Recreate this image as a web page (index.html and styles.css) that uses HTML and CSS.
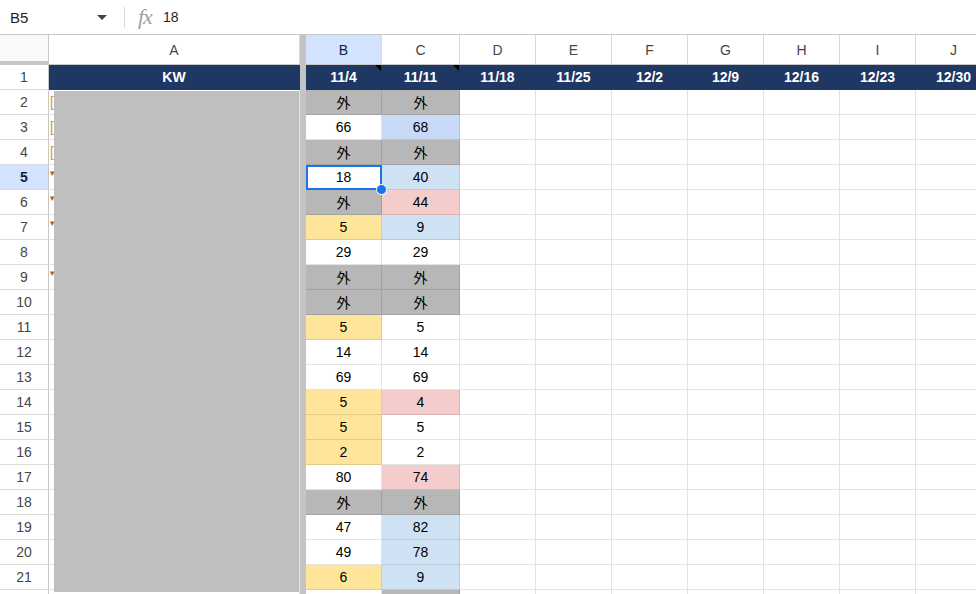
FILE: index.html
```html
<!DOCTYPE html>
<html lang="ja">
<head>
<meta charset="utf-8">
<title>Sheet</title>
<link rel="stylesheet" href="styles.css">
</head>
<body>
<div class="fbar">
  <div class="namebox"><span class="ref">B5</span><span class="caret"></span></div>
  <div class="sep"></div>
  <span class="fx">fx</span>
  <span class="fval">18</span>
</div>
<div class="sheet">
  <div class="row hdr">
    <div class="corner"></div>
    <div class="ch">A</div><div class="bar"></div>
    <div class="ch on">B</div><div class="ch">C</div><div class="ch">D</div><div class="ch">E</div><div class="ch">F</div><div class="ch">G</div><div class="ch">H</div><div class="ch">I</div><div class="ch">J</div>
  </div>
  <div class="row nav">
    <div class="rh">1</div>
    <div class="c n">KW</div><div class="bar"></div>
    <div class="c n note">11/4</div><div class="c n note">11/11</div><div class="c n">11/18</div><div class="c n">11/25</div><div class="c n">12/2</div><div class="c n">12/9</div><div class="c n">12/16</div><div class="c n">12/23</div><div class="c n">12/30</div>
  </div>
  <div class="row"><div class="rh">2</div><div class="c a"><span class="pk o">[</span></div><div class="bar"></div><div class="c g">外</div><div class="c g">外</div><div class="c"></div><div class="c"></div><div class="c"></div><div class="c"></div><div class="c"></div><div class="c"></div><div class="c"></div></div>
  <div class="row"><div class="rh">3</div><div class="c a"><span class="pk o">[</span></div><div class="bar"></div><div class="c">66</div><div class="c b2">68</div><div class="c"></div><div class="c"></div><div class="c"></div><div class="c"></div><div class="c"></div><div class="c"></div><div class="c"></div></div>
  <div class="row"><div class="rh">4</div><div class="c a"><span class="pk o">[</span></div><div class="bar"></div><div class="c g">外</div><div class="c g">外</div><div class="c"></div><div class="c"></div><div class="c"></div><div class="c"></div><div class="c"></div><div class="c"></div><div class="c"></div></div>
  <div class="row"><div class="rh sel">5</div><div class="c a"><span class="pk v">▾</span></div><div class="bar"></div><div class="c cur">18<span class="selbox"><span class="handle"></span></span></div><div class="c b1">40</div><div class="c"></div><div class="c"></div><div class="c"></div><div class="c"></div><div class="c"></div><div class="c"></div><div class="c"></div></div>
  <div class="row"><div class="rh">6</div><div class="c a"><span class="pk v">▾</span></div><div class="bar"></div><div class="c g">外</div><div class="c p">44</div><div class="c"></div><div class="c"></div><div class="c"></div><div class="c"></div><div class="c"></div><div class="c"></div><div class="c"></div></div>
  <div class="row"><div class="rh">7</div><div class="c a"><span class="pk v">▾</span></div><div class="bar"></div><div class="c y">5</div><div class="c b1">9</div><div class="c"></div><div class="c"></div><div class="c"></div><div class="c"></div><div class="c"></div><div class="c"></div><div class="c"></div></div>
  <div class="row"><div class="rh">8</div><div class="c a"></div><div class="bar"></div><div class="c">29</div><div class="c">29</div><div class="c"></div><div class="c"></div><div class="c"></div><div class="c"></div><div class="c"></div><div class="c"></div><div class="c"></div></div>
  <div class="row"><div class="rh">9</div><div class="c a"><span class="pk v">▾</span></div><div class="bar"></div><div class="c g">外</div><div class="c g">外</div><div class="c"></div><div class="c"></div><div class="c"></div><div class="c"></div><div class="c"></div><div class="c"></div><div class="c"></div></div>
  <div class="row"><div class="rh">10</div><div class="c a"></div><div class="bar"></div><div class="c g">外</div><div class="c g">外</div><div class="c"></div><div class="c"></div><div class="c"></div><div class="c"></div><div class="c"></div><div class="c"></div><div class="c"></div></div>
  <div class="row"><div class="rh">11</div><div class="c a"></div><div class="bar"></div><div class="c y">5</div><div class="c">5</div><div class="c"></div><div class="c"></div><div class="c"></div><div class="c"></div><div class="c"></div><div class="c"></div><div class="c"></div></div>
  <div class="row"><div class="rh">12</div><div class="c a"></div><div class="bar"></div><div class="c">14</div><div class="c">14</div><div class="c"></div><div class="c"></div><div class="c"></div><div class="c"></div><div class="c"></div><div class="c"></div><div class="c"></div></div>
  <div class="row"><div class="rh">13</div><div class="c a"></div><div class="bar"></div><div class="c">69</div><div class="c">69</div><div class="c"></div><div class="c"></div><div class="c"></div><div class="c"></div><div class="c"></div><div class="c"></div><div class="c"></div></div>
  <div class="row"><div class="rh">14</div><div class="c a"></div><div class="bar"></div><div class="c y">5</div><div class="c p">4</div><div class="c"></div><div class="c"></div><div class="c"></div><div class="c"></div><div class="c"></div><div class="c"></div><div class="c"></div></div>
  <div class="row"><div class="rh">15</div><div class="c a"></div><div class="bar"></div><div class="c y">5</div><div class="c">5</div><div class="c"></div><div class="c"></div><div class="c"></div><div class="c"></div><div class="c"></div><div class="c"></div><div class="c"></div></div>
  <div class="row"><div class="rh">16</div><div class="c a"></div><div class="bar"></div><div class="c y">2</div><div class="c">2</div><div class="c"></div><div class="c"></div><div class="c"></div><div class="c"></div><div class="c"></div><div class="c"></div><div class="c"></div></div>
  <div class="row"><div class="rh">17</div><div class="c a"></div><div class="bar"></div><div class="c">80</div><div class="c p">74</div><div class="c"></div><div class="c"></div><div class="c"></div><div class="c"></div><div class="c"></div><div class="c"></div><div class="c"></div></div>
  <div class="row"><div class="rh">18</div><div class="c a"></div><div class="bar"></div><div class="c g">外</div><div class="c g">外</div><div class="c"></div><div class="c"></div><div class="c"></div><div class="c"></div><div class="c"></div><div class="c"></div><div class="c"></div></div>
  <div class="row"><div class="rh">19</div><div class="c a"></div><div class="bar"></div><div class="c">47</div><div class="c b1">82</div><div class="c"></div><div class="c"></div><div class="c"></div><div class="c"></div><div class="c"></div><div class="c"></div><div class="c"></div></div>
  <div class="row"><div class="rh">20</div><div class="c a"></div><div class="bar"></div><div class="c">49</div><div class="c b1">78</div><div class="c"></div><div class="c"></div><div class="c"></div><div class="c"></div><div class="c"></div><div class="c"></div><div class="c"></div></div>
  <div class="row"><div class="rh">21</div><div class="c a"></div><div class="bar"></div><div class="c y">6</div><div class="c b1">9</div><div class="c"></div><div class="c"></div><div class="c"></div><div class="c"></div><div class="c"></div><div class="c"></div><div class="c"></div></div>
  <div class="row"><div class="rh"></div><div class="c a"></div><div class="bar"></div><div class="c"></div><div class="c g"></div><div class="c"></div><div class="c"></div><div class="c"></div><div class="c"></div><div class="c"></div><div class="c"></div><div class="c"></div></div>
  <div class="mask"></div>
</div>
</body>
</html>
```
FILE: styles.css
```css
html, body {
  margin: 0;
  padding: 0;
}
body {
  width: 976px;
  height: 594px;
  overflow: hidden;
  background: #fff;
  font-family: "Liberation Sans", Arial, "Noto Sans CJK JP", sans-serif;
  color: #000;
}
.fbar {
  height: 34px;
  border-bottom: 1px solid #c7c7c7;
  display: flex;
  align-items: center;
}
.namebox {
  width: 116px;
  box-sizing: border-box;
  padding: 0 9px 0 10px;
  display: flex;
  align-items: center;
  justify-content: space-between;
}
.ref {
  font-size: 15px;
  color: #1f1f1f;
}
.caret {
  width: 0;
  height: 0;
  border-left: 5px solid transparent;
  border-right: 5px solid transparent;
  border-top: 5px solid #444;
}
.sep {
  width: 1px;
  height: 21px;
  background: #d9d9d9;
  margin-left: 8px;
}
.fx {
  margin-left: 13px;
  font-family: "Liberation Serif", "DejaVu Serif", serif;
  font-style: italic;
  font-size: 22px;
  color: #a0a0a0;
  letter-spacing: -1px;
}
.fval {
  margin-left: 11px;
  font-size: 14px;
  color: #1f1f1f;
}
.sheet {
  position: relative;
  height: 559px;
  overflow: hidden;
}
.row {
  display: grid;
  grid-template-columns: 49px 251px 6px 76px 78px repeat(7, 76px);
  height: 25px;
  width: 992px;
}
.row.hdr {
  height: 30px;
}
.corner {
  box-sizing: border-box;
  background: #f8f9fa;
  border-right: 1px solid #c7c7c7;
  border-bottom: 4px solid #c7c7c7;
}
.ch {
  box-sizing: border-box;
  border-right: 1px solid #dadada;
  border-bottom: 1px solid #c7c7c7;
  display: flex;
  align-items: center;
  justify-content: center;
  font-size: 14px;
  color: #444746;
}
.ch.on {
  background: #d3e3fd;
  color: #0b1f4a;
}
.bar {
  background: #c4c4c4;
}
.rh {
  box-sizing: border-box;
  border-right: 1px solid #c7c7c7;
  border-bottom: 1px solid #dadada;
  display: flex;
  align-items: center;
  justify-content: center;
  font-size: 14px;
  color: #444746;
}
.rh.sel {
  background: #d3e3fd;
  color: #0b1f4a;
  font-weight: bold;
}
.c {
  position: relative;
  box-sizing: border-box;
  border-right: 1px solid rgba(0, 0, 0, 0.11);
  border-bottom: 1px solid rgba(0, 0, 0, 0.11);
  display: flex;
  align-items: center;
  justify-content: center;
  font-size: 14px;
  color: #000;
}
.c.a {
  justify-content: flex-start;
  padding-left: 1px;
}
.pk {
  font-size: 14px;
}
.pk.o {
  color: #e69138;
}
.pk.v {
  color: #b45f06;
  font-size: 9px;
  align-self: flex-start;
  margin-top: 3px;
}
.c.n {
  background: #1f3763;
  border-color: #1f3763;
  color: #fff;
  font-weight: bold;
}
.note::after {
  content: "";
  position: absolute;
  top: 0;
  right: 0;
  width: 0;
  height: 0;
  border-top: 6px solid #000;
  border-left: 6px solid transparent;
}
.c.g {
  background: #b7b7b7;
  font-family: "Noto Sans CJK JP", sans-serif;
  font-size: 14px;
}
.c.y {
  background: #ffe599;
}
.c.p {
  background: #f4cccc;
}
.c.b1 {
  background: #cfe2f3;
}
.c.b2 {
  background: #c9daf8;
}
.selbox {
  position: absolute;
  left: 0;
  top: 0;
  right: -1px;
  bottom: -1px;
  border: 2px solid #1a73e8;
  z-index: 2;
}
.handle {
  position: absolute;
  right: -7px;
  bottom: -7px;
  width: 9px;
  height: 9px;
  border-radius: 50%;
  background: #1a73e8;
  border: 1px solid #fff;
}
.mask {
  position: absolute;
  left: 54px;
  top: 56px;
  width: 245px;
  height: 501px;
  background: #bfbfbf;
  z-index: 1;
}
```
